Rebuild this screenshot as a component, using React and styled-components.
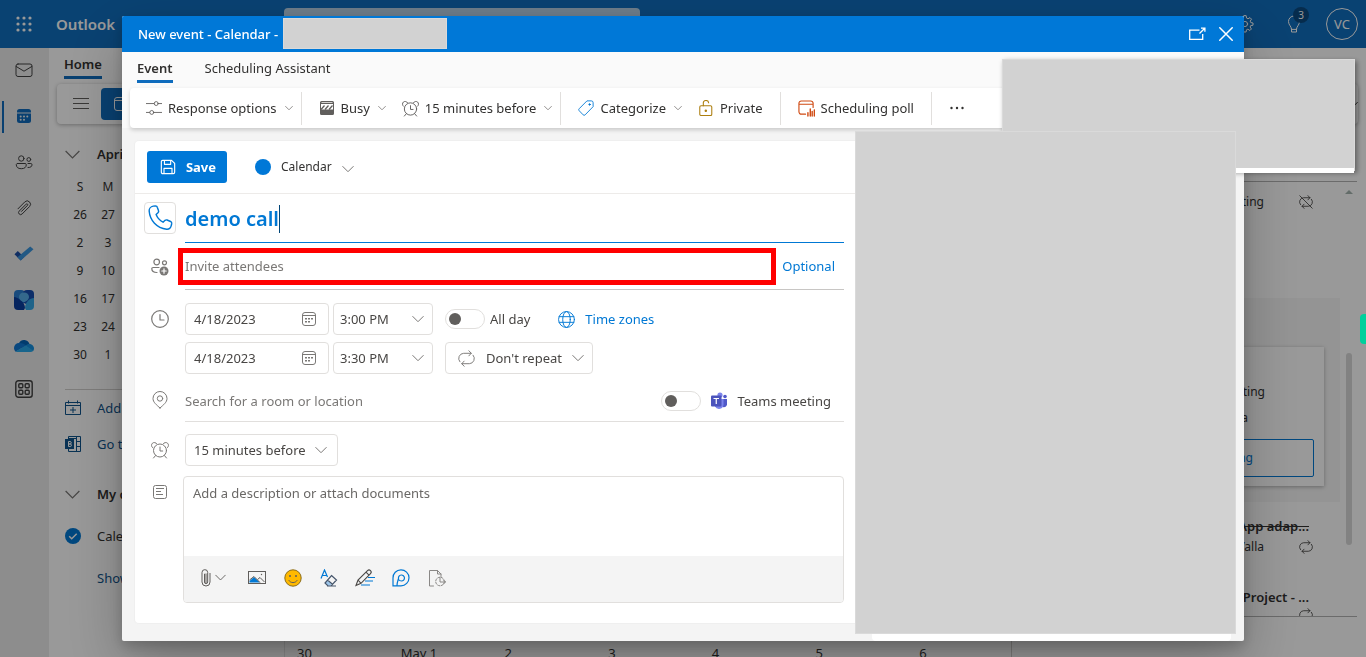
import React, { useState } from 'react';
import styled, { createGlobalStyle, css } from 'styled-components';

const GlobalStyle = createGlobalStyle`
  * {
    box-sizing: border-box;
  }

  body {
    margin: 0;
    overflow: hidden;
    color: #323130;
    font-family: 'Noto Sans', 'Open Sans', sans-serif;
    font-size: 13px;
    line-height: 20px;
  }

  button,
  input,
  select,
  textarea {
    margin: 0;
    padding: 0;
    border: 0;
    outline: 0;
    background: none;
    color: inherit;
    font: inherit;
  }

  a {
    color: inherit;
    text-decoration: none;
  }

  svg {
    display: block;
    flex: none;
  }
`;

/* ---------- icons ---------- */

const Icon = ({ size = 18, width = 1, color = 'currentColor', children }) => (
  <svg
    width={size}
    height={size}
    viewBox="0 0 18 18"
    fill="none"
    stroke={color}
    strokeWidth={width}
    strokeLinecap="round"
    strokeLinejoin="round"
    aria-hidden="true"
  >
    {children}
  </svg>
);

const ChevronIcon = ({ size = 12 }) => (
  <svg width={size} height={size} viewBox="0 0 12 12" fill="none" stroke="currentColor" strokeWidth={size < 10 ? 1.4 : 1} aria-hidden="true">
    <path d="M.5 3.200 6 8.700l5.500-5.500" />
  </svg>
);

const WaffleIcon = () => (
  <svg width="16" height="16" viewBox="0 0 16 16" fill="currentColor" aria-hidden="true">
    {[2, 8, 14].map((y) => [2, 8, 14].map((x) => <circle key={`${x}-${y}`} cx={x} cy={y} r="1.600" />))}
  </svg>
);

const MailIcon = () => (
  <Icon>
    <rect x="1" y="3" width="16" height="12.500" rx="2" />
    <path d="m1.200 5.500 7.800 4.700 7.800-4.700" />
  </Icon>
);

const CalendarFilledIcon = () => (
  <svg width="18" height="18" viewBox="0 0 18 18" aria-hidden="true">
    <path d="M4.500 2h9A2.500 2.500 0 0 1 16 4.500V5.500H2V4.500A2.500 2.500 0 0 1 4.500 2Z" fill="#0f6cbd" />
    <path d="M2 6.500h14v7a2.500 2.500 0 0 1-2.500 2.500h-9A2.500 2.500 0 0 1 2 13.500Z" fill="#0f6cbd" />
    <g fill="#f0f0f0">
      <circle cx="9" cy="9.500" r="1" />
      <circle cx="12.300" cy="9.500" r="1" />
      <circle cx="5.700" cy="9.500" r="1" />
      <circle cx="5.700" cy="12.700" r="1" />
      <circle cx="9" cy="12.700" r="1" />
    </g>
  </svg>
);

const PeopleIcon = () => (
  <Icon>
    <circle cx="6.300" cy="5.500" r="2.700" />
    <circle cx="13.800" cy="6.500" r="1.900" />
    <path d="M2.500 10.500h7.600c.8 0 1.200.5 1.200 1.200 0 2.400-1.600 4-5 4s-5-1.600-5-4c0-.7.500-1.200 1.200-1.200ZM13 10.500h2.800c.8 0 1.200.5 1.200 1.200 0 1.800-1.400 3-4 2.800" />
  </Icon>
);

const ClipIcon = () => (
  <Icon>
    <path d="m3 9.800 6.800-6.900a3.300 3.300 0 0 1 4.700 4.700l-7.400 7.400a2 2 0 0 1-2.900-2.900l7-7a.9.9 0 0 1 1.300 1.300l-6 6" />
  </Icon>
);

const ToDoIcon = () => (
  <svg width="20" height="18" viewBox="0 0 20 18" aria-hidden="true">
    <path d="m.5 9.300 3.300-3.400 6.300 6.200-3.400 3.500Z" fill="#1c4da5" />
    <path d="m6.700 15.600-3.300-3.300L16.200 1.500l3.300 2.700Z" fill="#3a94dd" />
  </svg>
);

const VivaIcon = () => (
  <svg width="20" height="20" viewBox="0 0 20 20" aria-hidden="true">
    <rect x="0" y="0" width="11" height="14" rx="4" fill="#2a7dd1" />
    <rect x="9" y="0" width="11" height="14" rx="4" fill="#164db0" />
    <path d="M0 7c4 0 11 5 11 11l-1 2H4a4 4 0 0 1-4-4Z" fill="#0b3f9e" />
    <path d="M20 8c-4 0-9 4-9 10l1 2h4a4 4 0 0 0 4-4Z" fill="#35a5e5" />
    <path d="M10 2.500c3 0 5 1.800 5 4.500 0 2.500-3 5-5 5s-5-2.500-5-5c0-2.700 2-4.500 5-4.500Z" fill="#57afe9" />
  </svg>
);

const OneDriveIcon = () => (
  <svg width="20" height="14" viewBox="0 0 20 14" aria-hidden="true">
    <path d="M5 4a5.700 5.700 0 0 1 10.500 1L8 9Z" fill="#0364b8" />
    <path d="M5.500 4A5 5 0 0 0 0 9c0 1.500.7 2.900 1.700 3.700L12 6.500A7.600 7.600 0 0 0 5.500 4Z" fill="#0f78d4" />
    <path d="M15 5c2.800 0 5 1.800 5 4.500a4 4 0 0 1-1 2.800L11.500 7c1-1.200 2-2 3.500-2Z" fill="#1490df" />
    <path d="M1.500 12.500 11.700 6.600l7.600 5.200c-.8.800-1.800 1.200-3 1.200H5c-1.400 0-2.500 0-3.500-.5Z" fill="#28a8ea" />
  </svg>
);

const AppsIcon = () => (
  <Icon width={1.4}>
    <rect x=".8" y=".8" width="16.400" height="16.400" rx="2.500" />
    <rect x="3.800" y="3.800" width="4" height="4" rx="1" />
    <rect x="10.200" y="3.800" width="4" height="4" rx="1" />
    <rect x="3.800" y="10.200" width="4" height="4" rx="1" />
    <rect x="10.200" y="10.200" width="4" height="4" rx="1" />
  </Icon>
);

const MenuIcon = () => (
  <svg width="16" height="16" viewBox="0 0 16 16" stroke="#605e5c" aria-hidden="true">
    <path d="M0 2.500h16M0 7.500h16M0 12.500h16" />
  </svg>
);

const CalendarIcon = ({ plain }) => (
  <svg width="16" height="16" viewBox="0 0 16 16" fill="none" stroke="currentColor" aria-hidden="true">
    <rect x="1.500" y="1.500" width="13" height="13" rx="2.500" />
    <path d="M1.500 4.500h13" />
    {!plain && (
      <g fill="currentColor" stroke="none">
        <rect x="7" y="7" width="2" height="1.500" />
        <rect x="10" y="7" width="2" height="1.500" />
        <rect x="4" y="7" width="2" height="1.500" />
        <rect x="4" y="10" width="2" height="1.500" />
        <rect x="7" y="10" width="2" height="1.500" />
      </g>
    )}
  </svg>
);

const CalendarAddIcon = () => (
  <svg width="16" height="16" viewBox="0 0 16 16" fill="none" stroke="currentColor" aria-hidden="true">
    <path d="M.5 2.500h15v12H.5zM.5 5.500h15M3.500.5v3M12.500.5v3M8 7v6M5 10h6" />
  </svg>
);

const BookingsIcon = () => (
  <svg width="16" height="16" viewBox="0 0 16 16" fill="none" stroke="#0f548c" aria-hidden="true">
    <path d="M3.500.5h12v15h-12zM11.500.5v15M11.500 5.500h4M11.500 10.500h4M3.500 2.500h8" />
    <rect x="0" y="3" width="9" height="10" fill="#0f548c" stroke="none" />
    <path d="M3.500 5.500v5h1.700a1.200 1.200 0 0 0 0-2.500H3.500h1.500a1.200 1.200 0 0 0 0-2.500Z" stroke="#fff" />
  </svg>
);

const CheckCircleIcon = () => (
  <svg width="16" height="16" viewBox="0 0 16 16" aria-hidden="true">
    <circle cx="8" cy="8" r="8" fill="#0078d4" />
    <path d="m4.200 8.200 2.500 2.500 5-5" fill="none" stroke="#fff" strokeWidth="1.500" />
  </svg>
);

const GearIcon = () => (
  <Icon>
    <circle cx="9" cy="9" r="2.600" />
    <path d="m7.700 1-.5 2.100-1.500.7L3.800 2.600 2.400 4.200l1.300 1.900-.6 1.500L1 8v2.200l2.200.4.6 1.400-1.300 2 1.500 1.500 2-1.300 1.400.6.4 2.200h2.300l.4-2.200 1.400-.6 2 1.300 1.500-1.500-1.300-2 .6-1.400 2.300-.4V8l-2.200-.4-.6-1.500 1.300-1.900-1.500-1.600-2 1.200-1.400-.7L10.200 1Z" />
  </Icon>
);

const BulbIcon = () => (
  <Icon>
    <path d="M6.500 14C6.500 11.500 3.500 10 3.500 6.500a5.500 5.500 0 0 1 11 0c0 3.500-3 5-3 7.500ZM6.500 14v3h5v-3" />
  </Icon>
);

const PopOutIcon = () => (
  <svg width="17" height="16" viewBox="0 0 17 16" fill="none" stroke="currentColor" strokeWidth="1.300" aria-hidden="true">
    <path d="M10.500 4.200H.7v9.100h13V8M10.500 7.500l5-5M12 2.200h3.900v3.500" />
  </svg>
);

const CloseIcon = () => (
  <Icon width={1.7} size={16}>
    <path d="m2 2 14 14M16 2 2 16" />
  </Icon>
);

const OptionsIcon = () => (
  <Icon size={16}>
    <path d="M0 4h9M14 4h4M0 14h4M9 14h9" />
    <circle cx="11.500" cy="4" r="2.200" />
    <circle cx="6.500" cy="14" r="2.200" />
  </Icon>
);

const BusyIcon = () => (
  <svg width="16" height="16" viewBox="0 0 16 16" aria-hidden="true">
    <path d="M2.500 1h11A1.500 1.500 0 0 1 15 2.500V4H1V2.500A1.500 1.500 0 0 1 2.500 1ZM1 9.500h14v4a1.500 1.500 0 0 1-1.500 1.500h-11A1.500 1.500 0 0 1 1 13.500Z" fill="#605e5c" />
    <path d="M1.500 3.500v7M14.500 3.500v7" fill="none" stroke="#605e5c" />
    <path d="M2.500 2.500h11" stroke="#d2d0ce" />
    <path d="m2 9.500 3.500-4M6 9.500l3.500-4M10 9.500l3.500-4" stroke="#605e5c" strokeWidth="1.300" />
  </svg>
);

const AlarmIcon = ({ size }) => (
  <Icon size={size}>
    <circle cx="9" cy="9.500" r="6.500" />
    <path d="M9 6v4h2.700M4.600 14.500 2.500 17M13.400 14.500l2.100 2.500M1.500 6.600A2.900 2.900 0 1 1 5.800 2.800M16.500 6.600a2.900 2.900 0 1 0-4.300-3.800" />
  </Icon>
);

const TagIcon = () => (
  <Icon size={16} color="#0078d4">
    <path d="M10.500 1H15a2 2 0 0 1 2 2v4.500L8 16.700a1.500 1.500 0 0 1-2.200 0L1.300 12a1.500 1.500 0 0 1 0-2.200Z" />
    <circle cx="13" cy="5" r=".8" fill="#0078d4" />
  </Icon>
);

const LockIcon = () => (
  <Icon size={16} width={1.2} color="#ad7f10">
    <rect x="2" y="6.500" width="13.500" height="11" rx="1.500" />
    <path d="M6 6.500V4a3 3 0 0 1 6-.8" />
    <circle cx="8.800" cy="12" r=".8" fill="#ad7f10" />
  </Icon>
);

const PollIcon = () => (
  <Icon size={17} width={1.2} color="#d04a12">
    <path d="M8 15H3.500A2.500 2.500 0 0 1 1 12.500v-9A2.500 2.500 0 0 1 3.500 1h10A2.500 2.500 0 0 1 16 3.500V8M1 4.500h15" />
    <path d="M10.500 13.500V17M13 9.500V17M15 12v5M17.300 10.500V17" strokeWidth="1.500" />
  </Icon>
);

const DotsIcon = () => (
  <svg width="16" height="16" viewBox="0 0 16 16" fill="#323130" aria-hidden="true">
    <circle cx="2.500" cy="8" r="1.200" />
    <circle cx="8" cy="8" r="1.200" />
    <circle cx="13.500" cy="8" r="1.200" />
  </svg>
);

const SaveIcon = () => (
  <Icon size={16} width={1.3}>
    <path d="M3 1.500h10L16.500 5v10a1.500 1.500 0 0 1-1.500 1.500H3A1.500 1.500 0 0 1 1.500 15V3A1.500 1.500 0 0 1 3 1.500ZM5 1.500V6h7V1.500M4.500 16.500v-6h9v6" />
  </Icon>
);

const PhoneIcon = () => (
  <Icon size={26}>
    <path d="m4.300.8 1.500-.2c.6 0 1.200.3 1.300.9l.9 2.500c.2.500 0 1-.4 1.400L6.300 6.600c.9 2.300 2.600 4.200 4.800 5.300l1.400-1.300c.4-.3.900-.4 1.400-.2l2.400 1c.6.300.9.900.8 1.500l-.3 1.300c-.2 1.600-1.600 2.800-3.200 2.600C6.700 15.900 2 10.800 1.500 4.200 1.400 2.600 2.600 1.100 4.300.8Z" />
  </Icon>
);

const InviteIcon = () => (
  <Icon width={1.2}>
    <circle cx="5.700" cy="4" r="2.800" />
    <circle cx="13.500" cy="4.800" r="2" />
    <path d="M8 9.500H2.200c-.8 0-1.400.6-1.400 1.300 0 2.200 1.600 3.700 5.200 3.700" />
    <circle cx="13" cy="13" r="4.500" fill="currentColor" stroke="none" />
    <path d="M13 10.800v4.400M10.800 13h4.400" stroke="#fff" />
  </Icon>
);

const ClockIcon = () => (
  <Icon width={1.2}>
    <circle cx="9" cy="9" r="8.300" />
    <path d="M9 4.500V10h4" />
  </Icon>
);

const GlobeIcon = () => (
  <Icon size={17} color="#0078d4">
    <circle cx="9" cy="9" r="8.400" />
    <ellipse cx="9" cy="9" rx="4" ry="8.400" />
    <path d="M1.300 6h15.400M1.300 12h15.400" />
  </Icon>
);

const repeatPath = 'M11.500.8 14 3.500l-2.500 2.700M14 3.500H6a5.500 5.500 0 0 0-4 9M6.500 17.200 4 14.500l2.500-2.700M4 14.500h8a5.500 5.500 0 0 0 4-9';

const RepeatIcon = ({ size = 16 }) => (
  <Icon size={size}>
    <path d={repeatPath} />
  </Icon>
);

const RepeatOffIcon = () => (
  <Icon size={14}>
    <path d={`${repeatPath}M1 1l16 16`} />
  </Icon>
);

const PinIcon = () => (
  <Icon>
    <path d="M9 17C5.500 13.800 2 11.300 2 7.500a7 7 0 0 1 14 0c0 3.800-3.500 6.300-7 9.500Z" />
    <circle cx="9" cy="7.500" r="2.700" />
  </Icon>
);

const NoteIcon = () => (
  <svg width="16" height="16" viewBox="0 0 16 16" fill="none" stroke="currentColor" aria-hidden="true">
    <rect x="1.500" y="1.500" width="13" height="13" rx="2" />
    <path d="M4 4.500h8M4 7.500h5M4 10.500h7" />
  </svg>
);

const TeamsIcon = () => (
  <svg width="18" height="18" viewBox="0 0 18 18" aria-hidden="true">
    <circle cx="15" cy="4.500" r="1.800" fill="#5059c9" />
    <circle cx="10" cy="3" r="2.600" fill="#7b83eb" />
    <path d="M13 7h4v5.500a3 3 0 0 1-4 2.500Z" fill="#5059c9" />
    <path d="M5 7h8.500v5.500a4.500 4.500 0 0 1-8.500 2Z" fill="#7b83eb" />
    <rect x="1" y="3.500" width="10.500" height="11" rx="1" fill="#4b53bc" />
    <path d="M3.500 6.500h5.500M6.250 6.500v5.500" stroke="#fff" strokeWidth="1.200" />
  </svg>
);

const AttachIcon = () => (
  <svg width="10" height="18" viewBox="0 0 10 18" fill="none" stroke="#605e5c" aria-hidden="true">
    <path d="M3 4.500h3.500v8.500a1.700 1.700 0 0 1-3.400 0Z" fill="#a8a6a4" stroke="none" />
    <path d="M9 4v9a4 4 0 0 1-8 0V3.500a2.800 2.800 0 0 1 5.700 0V13a1.600 1.600 0 0 1-3.200 0V5" />
  </svg>
);

const ImageIcon = () => (
  <svg width="18" height="18" viewBox="0 0 18 18" aria-hidden="true">
    <path d="M1.500 13.500V12L6 8l6 5.500Z" fill="#0078d4" />
    <path d="m1.500 11 4.500-3.500 6 6M9.500 10.500l2.500-2 4.500 4.500" fill="none" stroke="#605e5c" />
    <rect x=".5" y="2.500" width="17" height="12" fill="none" stroke="#605e5c" />
    <circle cx="13.500" cy="5.500" r=".7" fill="#605e5c" />
  </svg>
);

const SmileIcon = () => (
  <svg width="18" height="18" viewBox="0 0 18 18" fill="none" aria-hidden="true">
    <circle cx="9" cy="9" r="8.200" fill="#ffb900" stroke="#8a6d1c" />
    <circle cx="6" cy="7" r="1" fill="#605e5c" />
    <circle cx="12" cy="7" r="1" fill="#605e5c" />
    <path d="M4.800 11.200c1.800 3.200 6.600 3.200 8.400 0" stroke="#605e5c" />
  </svg>
);

const ClearFormatIcon = () => (
  <svg width="18" height="18" viewBox="0 0 18 18" fill="none" aria-hidden="true">
    <path d="M1 9.500 4.500 1 7.500 8M2.200 6.500h4.600" stroke="#0078d4" strokeWidth="1.200" />
    <path d="m5.500 13.800 2-2.300 4 3.700-1.200 1.500H8Z" fill="#9cc5ea" />
    <path d="m11.500 6.500 5 4.500-5.500 6H8l-3-3ZM7.500 11l5 4.200M7 17h9" stroke="#44546a" strokeWidth="1.200" />
  </svg>
);

const PenIcon = () => (
  <svg width="18" height="18" viewBox="1 0 18 18" fill="none" overflow="visible" aria-hidden="true">
    <path d="M13 8.500h7M10 12h8M6 16h9" stroke="#0078d4" strokeWidth="1.200" />
    <path d="M1 16.500 3 11 12.500 1.700a2 2 0 0 1 3 3L6 14.300ZM3 11l3 3.300M11 3.200l3 3" fill="#f4f4f4" stroke="#484644" strokeWidth="1.100" />
  </svg>
);

const LoopIcon = () => (
  <Icon color="#0078d4" width={1.2}>
    <path d="M1 16.800V9a8 8 0 1 1 8 7.800Z" strokeLinejoin="miter" />
    <path d="M5 16.500c0-3 .8-4.500 1.500-7A3 3 0 1 1 9.500 12C8.300 12 7.200 11.500 6.500 10.500" />
  </Icon>
);

const TemplateIcon = () => (
  <Icon color="#8a8886">
    <path d="M5.500 17h-4V1.500h8L13 5v2.500M9.500 1.500V5H13" strokeLinejoin="miter" />
    <circle cx="12" cy="12.500" r="4.300" strokeDasharray="2 1.500" />
    <path d="M12 8.500v4.500h5.500M15.500 11l2 2-2 2" />
  </Icon>
);

/* ---------- page behind the dialog ---------- */

const Page = styled.div`
  display: flex;
  flex-direction: column;
  height: 100vh;
  overflow: hidden;
  background: #fff;
`;

const TopBar = styled.header`
  display: grid;
  grid-template-columns: 16px 204px minmax(0, 356px) 1fr;
  align-items: center;
  column-gap: 24px;
  height: 48px;
  padding: 0 8px 0 16px;
  flex: none;
  background: #106ebe;
  color: #fff;
`;

const Brand = styled.a`
  font-size: 15px;
  font-weight: 600;
`;

const SearchBox = styled.input`
  width: 100%;
  height: 32px;
  border-radius: 4px;
  background: #b7d0e6;
`;

const TopActions = styled.div`
  display: flex;
  justify-content: flex-end;
  align-items: center;
  gap: 31px;
`;

const IconButton = styled.button`
  position: relative;
  display: flex;
  align-items: center;
  justify-content: center;
  gap: 4px;
  margin-right: ${(props) => (props.$menu ? 4 : 0)}px;
  color: inherit;
  cursor: pointer;
`;

const Badge = styled.span`
  position: absolute;
  top: -8px;
  left: 8px;
  width: 16px;
  height: 16px;
  border-radius: 8px;
  background: #0b4a80;
  font-size: 10px;
  line-height: 16px;
`;

const Avatar = styled.button`
  width: 32px;
  height: 32px;
  margin-left: -8px;
  border: 1px solid #fff;
  border-radius: 50%;
`;

const Shell = styled.div`
  display: flex;
  flex: 1;
  min-height: 0;
`;

const Rail = styled.nav`
  width: 48px;
  flex: none;
  background: #ebebeb;
  box-shadow: 1px 0 0 #ebebeb;
  color: #424242;
`;

const RailItem = styled.a`
  display: flex;
  align-items: center;
  justify-content: center;
  height: ${(props) => (props.$short ? '40px' : '46px')};
  padding-bottom: 2px;

  ${(props) =>
    props.$active &&
    css`
      background: linear-gradient(#0f6cbd, #0f6cbd) 2px center / 2px 32px no-repeat;
    `}
`;

const Workspace = styled.div`
  display: flex;
  flex-direction: column;
  flex: 1;
  min-width: 0;
  padding-left: 1px;
`;

const HomeTab = styled.div`
  padding: 6px 15px 0;
  height: 36px;

  a {
    display: inline-block;
    height: 25px;
    border-bottom: 3px solid #0f6cbd;
    font-weight: 600;
  }
`;

const Ribbon = styled.div`
  display: flex;
  align-items: center;
  gap: 12px;
  height: 40px;
  margin: 0 8px;
  padding-left: 16px;
  flex: none;
  border-radius: 4px;
  background: #fff;
  box-shadow: 0 1px 4px rgba(0, 0, 0, 0.3);

  > svg:last-child {
    margin-left: auto;
  }
`;

const NewEventButton = styled.button`
  display: flex;
  align-items: center;
  width: 120px;
  height: 32px;
  padding: 0 12px;
  border-radius: 4px;
  background: #0f6cbd;
  color: #fff;
`;

const Columns = styled.div`
  display: flex;
  flex: 1;
  min-height: 0;
`;

const Sidebar = styled.aside`
  width: 236px;
  padding: 12px 16px;
  flex: none;
  border-right: 1px solid #e6e6e6;
`;

const SideRow = styled.a`
  display: grid;
  grid-template-columns: 16px 1fr;
  column-gap: 16px;
  align-items: center;
  height: ${(props) => props.$height || 36}px;
  color: ${(props) => (props.$link ? '#0f548c' : '#323130')};
  font-weight: ${(props) => (props.$strong ? 600 : 400)};
  white-space: nowrap;

  span {
    grid-column: 2;
  }

  svg {
    color: ${(props) => (props.$link ? '#0f548c' : '#797775')};
  }
`;

const MonthGrid = styled.table`
  border-collapse: collapse;
  border-spacing: 0;
  margin: 1px 0 0 1px;
  font-size: 12px;
  text-align: center;

  th,
  td {
    width: 28px;
    height: 28px;
    padding: 0;
    font-weight: 400;
  }
`;

const Divider = styled.hr`
  height: 1px;
  margin: 20px 0 0;
  border: 0;
  background: #d2d0ce;
`;

const Month = styled.section`
  display: flex;
  flex-direction: column;
  justify-content: flex-end;
  flex: 1;
  border-right: 1px solid #d2d0ce;
`;

const Week = styled.div`
  display: grid;
  grid-template-columns: repeat(7, 1fr);
  height: 14px;

  span {
    padding-left: 12px;
  }
`;

const Agenda = styled.aside`
  display: flex;
  flex-direction: column;
  width: 354px;
  margin-bottom: 40px;
  padding-top: 57px;
  flex: none;
`;

const AgendaList = styled.div`
  display: grid;
  grid-template-columns: 1fr 17px;
  flex: 1;
  min-height: 0;
  margin-right: 9px;
  overflow: hidden;
  border: solid #b3b3b3;
  border-width: 1px 0;
`;

const AgendaItems = styled.div`
  display: flex;
  flex-direction: column;
  padding-left: 16px;
`;

const AgendaEvent = styled.div`
  display: flex;
  flex-direction: column;
  gap: 1px;
  height: ${(props) => props.$height}px;
  padding: ${(props) => (props.$first ? 10 : 14)}px 31px 0 0;
  flex: none;
  text-align: right;
  font-size: 12px;
`;

const EventName = styled.strong`
  font-size: 13px;
  font-weight: 600;
  text-decoration: ${(props) => (props.$past ? 'line-through' : 'none')};
`;

const EventMeta = styled.div`
  display: flex;
  justify-content: flex-end;
  align-items: center;
  gap: 35px;
  margin-right: -4px;
`;

const ActiveEvent = styled.div`
  height: 204px;
  padding: 49px 16px 0 0;
  flex: none;
  background: #f7f7f7;
`;

const EventCard = styled.div`
  display: flex;
  flex-direction: column;
  height: 139px;
  padding: 35px 10px 8px;
  background: #fff;
  box-shadow: 0 1px 4px rgba(0, 0, 0, 0.3);
  text-align: right;
  font-size: 12px;

  p {
    margin: 0 49px 6px 0;
  }

  p + p {
    margin-right: 66px;
  }

  button {
    height: 38px;
    margin-top: 5px;
    padding-right: 60px;
    flex: none;
    border: 1px solid #0078d4;
    border-radius: 2px;
    color: #0078d4;
    text-align: right;
  }
`;

const ScrollBar = styled.div`
  display: grid;
  grid-template-rows: 163px 192px 1fr;
  justify-items: center;
  padding: 8px 0 6px;

  &::before,
  &::after {
    content: '';
    height: 0;
    border: solid transparent;
    border-width: 0 4px;
  }

  &::before {
    border-bottom: 4px solid #a5b5b0;
  }

  &::after {
    align-self: end;
    border-top: 4px solid #a5b5b0;
  }

  i {
    width: 6px;
    border-radius: 3px;
    background: #d9d9d9;
  }
`;

const EdgeTab = styled.div`
  position: fixed;
  z-index: 3;
  top: 314px;
  right: 0;
  width: 6px;
  height: 30px;
  border-radius: 4px 0 0 4px;
  background: #00d09c;
`;

/* ---------- dialog ---------- */

const Overlay = styled.div`
  position: fixed;
  z-index: 2;
  inset: 0;
  display: flex;
  padding: 16px 122px;
  background: rgba(0, 0, 0, 0.4);
`;

const Dialog = styled.section`
  position: relative;
  display: flex;
  flex-direction: column;
  flex: 1;
  border-radius: 2px;
  background: linear-gradient(#fafafa 112px, #f4f4f4 112px);
  box-shadow: 0 25px 58px rgba(0, 0, 0, 0.25), 0 5px 14px rgba(0, 0, 0, 0.2);
`;

const DialogHeader = styled.header`
  display: flex;
  align-items: center;
  height: 36px;
  padding: 0 10px 0 16px;
  flex: none;
  gap: 12px;
  border-radius: 2px 2px 0 0;
  background: #0078d7;
  color: #fff;

  h1 {
    margin: 0 auto 0 0;
    font-size: 13px;
    font-weight: 500;
  }
`;

const Tabs = styled.nav`
  display: flex;
  gap: 32px;
  height: 36px;
  padding: 6px 15px 0;
  flex: none;
`;

const Tab = styled.button`
  height: 25px;
  padding-bottom: 2px;
  border-bottom: 3px solid ${(props) => (props.$active ? '#0f6cbd' : 'transparent')};
  font-weight: ${(props) => (props.$active ? 600 : 400)};
`;

const Toolbar = styled.div`
  display: flex;
  align-items: center;
  height: 40px;
  margin: 0 8px 13px;
  padding-left: 8px;
  flex: none;
  border-radius: 4px;
  background: #fff;
  box-shadow: 0 2px 4px rgba(0, 0, 0, 0.18);
`;

const ToolButton = styled.button`
  display: flex;
  align-items: center;
  gap: 6px;
  height: 32px;
  padding: 0 ${(props) => (props.$wide ? 17 : 8)}px 0 8px;
  color: #323130;

  svg:first-child {
    color: #605e5c;
  }

  span + svg {
    margin-left: 2px;
    color: #8a8886;
  }
`;

const ToolDivider = styled.span`
  width: 1px;
  height: 33px;
  margin-right: 9px;
  background: #e1dfdd;
`;

const DialogBody = styled.div`
  display: grid;
  grid-template-columns: minmax(0, 1fr) 359px;
  column-gap: 8px;
  flex: 1;
  min-height: 0;
  padding: 0 13px;
`;

const Form = styled.form`
  display: flex;
  flex-direction: column;
  margin-bottom: 18px;
  border-radius: 4px;
  background: #fff;
  box-shadow: 0 0 1px 1px #efefef;
`;

const SidePane = styled.div`
  border-radius: 4px;
  background: #fff;
`;

const FormActions = styled.div`
  display: flex;
  align-items: center;
  gap: 28px;
  height: 53px;
  padding-left: 12px;
  flex: none;
  border-bottom: 1px solid #edebe9;
`;

const SaveButton = styled.button`
  display: flex;
  align-items: center;
  justify-content: center;
  gap: 10px;
  width: 80px;
  height: 32px;
  padding-left: 2px;
  border-radius: 3px;
  background: #0078d7;
  color: #fff;
  font-weight: 700;
`;

const CalendarPicker = styled.button`
  display: flex;
  align-items: center;
  gap: 10px;
  font-size: 12px;

  i {
    width: 16px;
    height: 16px;
    border-radius: 50%;
    background: #0078d7;
  }

  svg {
    margin-top: 4px;
    color: #797775;
  }
`;

const Fields = styled.div`
  display: flex;
  flex-direction: column;
  padding: 0 20px 0 9px;
`;

const Field = styled.div`
  display: grid;
  grid-template-columns: 32px 1fr;
  column-gap: 9px;
  margin-top: ${(props) => props.$top || 0}px;
  color: #484644;
`;

const FieldIcon = styled.span`
  display: flex;
  align-items: center;
  justify-content: center;
  height: ${(props) => props.$height || 32}px;
  color: #7a7876;
`;

const CharmButton = styled.button`
  display: flex;
  align-items: center;
  justify-content: center;
  height: 32px;
  border: 1px solid #e1dfdd;
  border-radius: 4px;
  color: #0078d4;
`;

const Line = styled.div`
  position: relative;
  display: flex;
  align-items: center;
  min-width: 0;
  height: ${(props) => props.$height}px;
  padding: 0 ${(props) => props.$right || 0}px ${(props) => props.$bottom || 0}px 0;
  border-bottom: 1px solid ${(props) => props.$color || '#e1dfdd'};
`;

const TitleInput = styled.input`
  field-sizing: content;
  height: 28px;
  border-right: 1px solid #004578;
  color: #0078d4;
  font-size: 20px;
  font-weight: 600;
  line-height: 28px;
`;

const TextInput = styled.input`
  flex: 1;
  min-width: 0;
  height: 32px;

  &::placeholder {
    color: #7a7876;
    opacity: 1;
  }
`;

const Highlight = styled.div`
  position: absolute;
  top: 5px;
  right: 68px;
  bottom: 4px;
  left: -7px;
  border: 5px solid #f00;
  pointer-events: none;
`;

const TextLink = styled.a`
  display: flex;
  align-items: center;
  gap: 10px;
  color: #0078d4;
`;

const DateRows = styled.div`
  display: grid;
  grid-template-columns: 144px 100px auto;
  justify-content: start;
  gap: 7px 4px;
`;

const Box = styled.div`
  display: flex;
  align-items: center;
  justify-content: space-between;
  gap: 10px;
  height: 32px;
  padding: 0 11px 0 8px;
  border: 1px solid #e1dfdd;
  border-radius: 4px;

  input {
    flex: 1;
    min-width: 0;
  }

  svg {
    color: #7a7876;
  }
`;

const SelectBox = styled(Box)`
  display: inline-grid;
  grid-template-columns: ${(props) => (props.$icon ? '18px ' : '')}1fr 12px;
  column-gap: ${(props) => (props.$icon ? 10 : 8)}px;
  width: ${(props) => props.$width}px;
  padding: 0 ${(props) => props.$right || 8}px 0 ${(props) => props.$left || 6}px;

  select {
    grid-row: 1;
    grid-column: ${(props) => (props.$icon ? '2 / 4' : '1 / 3')};
    appearance: none;
  }

  svg {
    grid-row: 1;
    pointer-events: none;
  }

  svg:last-child {
    grid-column: ${(props) => (props.$icon ? 3 : 2)};
  }
`;

const RowOptions = styled.div`
  display: flex;
  align-items: center;
  gap: 28px;
  padding-left: 8px;
`;

const Switch = styled.label`
  display: flex;
  align-items: center;
  gap: ${(props) => props.$gap || 5}px;
  white-space: nowrap;

  input {
    display: flex;
    align-items: center;
    width: 40px;
    height: 20px;
    padding: 0 3px;
    appearance: none;
    border: 1px solid #e1dfdd;
    border-radius: 10px;
  }

  input::before {
    content: '';
    width: 12px;
    height: 12px;
    border-radius: 50%;
    background: #605e5c;
  }

  input:checked {
    justify-content: flex-end;
    background: #c7e0f4;
  }
`;

const Editor = styled.div`
  display: flex;
  flex-direction: column;
  height: 127px;
  margin-left: -2px;
  overflow: hidden;
  border: 1px solid #e1dfdd;
  border-radius: 4px;

  textarea {
    flex: 1;
    padding: 6px 9px;
    resize: none;
  }

  textarea::placeholder {
    color: #6a6866;
    opacity: 1;
  }
`;

const EditorTools = styled.div`
  display: flex;
  align-items: center;
  gap: 18px;
  height: 46px;
  padding: 0 17px 3px;
  background: #f4f4f4;
  color: #605e5c;
`;

/* redaction blocks lying over the window */
const Mask = styled.div`
  position: absolute;
  background: #d2d2d2;
  border: 1px solid #dadada;
`;

const TitleMask = styled(Mask)`
  top: 2px;
  left: 161px;
  width: 164px;
  height: 31px;
`;

const PaneMask = styled(Mask)`
  top: 115px;
  right: 8px;
  bottom: 7px;
  left: 733px;
`;

const CornerMask = styled(Mask)`
  top: 43px;
  right: -111px;
  left: 880px;
  height: 112px;
  box-shadow: 2px 2px 5px rgba(0, 0, 0, 0.4);
`;

const CornerStrip = styled.div`
  position: absolute;
  top: 152px;
  right: -110px;
  width: 119px;
  height: 5px;
  background: #fff;
`;

const weeks = [
  [26, 27, 28, 29, 30, 31, 1],
  [2, 3, 4, 5, 6, 7, 8],
  [9, 10, 11, 12, 13, 14, 15],
  [16, 17, 18, 19, 20, 21, 22],
  [23, 24, 25, 26, 27, 28, 29],
  [30, 1, 2, 3, 4, 5, 6],
];

const railItems = [
  { name: 'Mail', icon: <MailIcon /> },
  { name: 'Calendar', icon: <CalendarFilledIcon />, active: true },
  { name: 'People', icon: <PeopleIcon /> },
  { name: 'Files', icon: <ClipIcon /> },
  { name: 'To Do', icon: <ToDoIcon /> },
  { name: 'Viva', icon: <VivaIcon /> },
  { name: 'OneDrive', icon: <OneDriveIcon /> },
  { name: 'More apps', icon: <AppsIcon />, short: true },
];

const Background = () => (
  <Page>
    <TopBar>
      <WaffleIcon />
      <Brand href="#">Outlook</Brand>
      <SearchBox aria-label="Search" />
      <TopActions>
        <IconButton aria-label="Settings">
          <GearIcon />
        </IconButton>
        <IconButton aria-label="Tips">
          <BulbIcon />
          <Badge>3</Badge>
        </IconButton>
        <Avatar>VC</Avatar>
      </TopActions>
    </TopBar>
    <Shell>
      <Rail>
        {railItems.map((item) => (
          <RailItem key={item.name} href="#" aria-label={item.name} $active={item.active} $short={item.short}>
            {item.icon}
          </RailItem>
        ))}
      </Rail>
      <Workspace>
        <HomeTab>
          <a href="#">Home</a>
        </HomeTab>
        <Ribbon>
          <MenuIcon />
          <NewEventButton aria-label="New event">
            <CalendarIcon plain />
          </NewEventButton>
          <ChevronIcon size={8} />
        </Ribbon>
        <Columns>
          <Sidebar>
            <SideRow href="#" $strong>
              <ChevronIcon size={15} />
              <span>April 2023</span>
            </SideRow>
            <MonthGrid>
              <thead>
                <tr>
                  {['S', 'M', 'T', 'W', 'T', 'F', 'S'].map((day, i) => (
                    <th key={i}>{day}</th>
                  ))}
                </tr>
              </thead>
              <tbody>
                {weeks.map((week, i) => (
                  <tr key={i}>
                    {week.map((day) => (
                      <td key={day}>{day}</td>
                    ))}
                  </tr>
                ))}
              </tbody>
            </MonthGrid>
            <Divider />
            <SideRow href="#" $link>
              <CalendarAddIcon />
              <span>Add calendar</span>
            </SideRow>
            <SideRow href="#" $link>
              <BookingsIcon />
              <span>Go to Booking</span>
            </SideRow>
            <SideRow href="#" $strong $height={64}>
              <ChevronIcon size={15} />
              <span>My calendars</span>
            </SideRow>
            <SideRow href="#" $height={10}>
              <CheckCircleIcon />
              <span>Calendar</span>
            </SideRow>
            <SideRow href="#" $link $height={84}>
              <span>Show all</span>
            </SideRow>
          </Sidebar>
          <Month>
            <Week>
              {['30', 'May 1', '2', '3', '4', '5', '6'].map((day) => (
                <span key={day}>{day}</span>
              ))}
            </Week>
          </Month>
          <Agenda>
            <AgendaList>
              <AgendaItems>
                <AgendaEvent $height={116} $first>
                  <EventMeta>
                    Microsoft Teams Meeting <RepeatOffIcon />
                  </EventMeta>
                </AgendaEvent>
                <ActiveEvent>
                  <EventCard>
                    <p>Microsoft Teams Meeting</p>
                    <p>Valla</p>
                    <button>Join meeting</button>
                  </EventCard>
                </ActiveEvent>
                <AgendaEvent $height={71}>
                  <EventName $past>App adap...</EventName>
                  <EventMeta>
                    Valla <RepeatIcon size={14} />
                  </EventMeta>
                </AgendaEvent>
                <AgendaEvent $height={71}>
                  <EventName>Project - ...</EventName>
                  <EventMeta>
                    <RepeatIcon size={14} />
                  </EventMeta>
                </AgendaEvent>
              </AgendaItems>
              <ScrollBar>
                <i />
              </ScrollBar>
            </AgendaList>
          </Agenda>
        </Columns>
      </Workspace>
    </Shell>
  </Page>
);

const App = () => {
  const [title, setTitle] = useState('demo call');
  const [allDay, setAllDay] = useState(false);
  const [teams, setTeams] = useState(false);

  return (
    <>
      <GlobalStyle />
      <Background />
      <Overlay>
        <Dialog role="dialog" aria-label="New event">
          <DialogHeader>
            <h1>New event - Calendar -</h1>
            <IconButton aria-label="Open in new window">
              <PopOutIcon />
            </IconButton>
            <IconButton aria-label="Close">
              <CloseIcon />
            </IconButton>
          </DialogHeader>
          <Tabs>
            <Tab $active>Event</Tab>
            <Tab>Scheduling Assistant</Tab>
          </Tabs>
          <Toolbar>
            <ToolButton>
              <OptionsIcon />
              <span>Response options</span>
              <ChevronIcon size={8} />
            </ToolButton>
            <ToolDivider />
            <ToolButton>
              <BusyIcon />
              <span>Busy</span>
              <ChevronIcon size={8} />
            </ToolButton>
            <ToolButton>
              <AlarmIcon size={17} />
              <span>15 minutes before</span>
              <ChevronIcon size={8} />
            </ToolButton>
            <ToolDivider />
            <ToolButton>
              <TagIcon />
              <span>Categorize</span>
              <ChevronIcon size={8} />
            </ToolButton>
            <ToolButton $wide>
              <LockIcon />
              <span>Private</span>
            </ToolButton>
            <ToolDivider />
            <ToolButton $wide>
              <PollIcon />
              <span>Scheduling poll</span>
            </ToolButton>
            <ToolDivider />
            <ToolButton aria-label="More options">
              <DotsIcon />
            </ToolButton>
          </Toolbar>
          <DialogBody>
            <Form onSubmit={(e) => e.preventDefault()}>
              <FormActions>
                <SaveButton type="submit">
                  <SaveIcon />
                  Save
                </SaveButton>
                <CalendarPicker type="button">
                  <i />
                  Calendar
                  <ChevronIcon />
                </CalendarPicker>
              </FormActions>
              <Fields>
                <Field $top={8}>
                  <CharmButton type="button" aria-label="Charm">
                    <PhoneIcon />
                  </CharmButton>
                  <Line $height={41} $bottom={6} $color="#0078d4">
                    <TitleInput aria-label="Title" value={title} onChange={(e) => setTitle(e.target.value)} />
                  </Line>
                </Field>
                <Field>
                  <FieldIcon as="label" htmlFor="attendees" $height={48}>
                    <InviteIcon />
                  </FieldIcon>
                  <Line $height={47} $right={9} $color="#c8c6c4">
                    <TextInput id="attendees" placeholder="Invite attendees" />
                    <TextLink href="#">Optional</TextLink>
                    <Highlight />
                  </Line>
                </Field>
                <Field $top={12}>
                  <FieldIcon>
                    <ClockIcon />
                  </FieldIcon>
                  <DateRows>
                    <Box>
                      <input aria-label="Start date" defaultValue="4/18/2023" />
                      <CalendarIcon />
                    </Box>
                    <SelectBox $width={100}>
                      <select aria-label="Start time">
                        <option>3:00 PM</option>
                      </select>
                      <ChevronIcon />
                    </SelectBox>
                    <RowOptions>
                      <Switch>
                        <input type="checkbox" checked={allDay} onChange={() => setAllDay(!allDay)} />
                        All day
                      </Switch>
                      <TextLink href="#">
                        <GlobeIcon />
                        Time zones
                      </TextLink>
                    </RowOptions>
                    <Box>
                      <input aria-label="End date" defaultValue="4/18/2023" />
                      <CalendarIcon />
                    </Box>
                    <SelectBox $width={100}>
                      <select aria-label="End time">
                        <option>3:30 PM</option>
                      </select>
                      <ChevronIcon />
                    </SelectBox>
                    <RowOptions>
                      <SelectBox $width={148} $left={12} $icon>
                        <RepeatIcon size={17} />
                        <select aria-label="Repeat">
                          <option>Don't repeat</option>
                        </select>
                        <ChevronIcon />
                      </SelectBox>
                    </RowOptions>
                  </DateRows>
                </Field>
                <Field $top={6}>
                  <FieldIcon as="label" htmlFor="location" $height={40}>
                    <PinIcon />
                  </FieldIcon>
                  <Line $height={42} $right={13}>
                    <TextInput id="location" placeholder="Search for a room or location" />
                    <Switch $gap={9}>
                      <input type="checkbox" checked={teams} onChange={() => setTeams(!teams)} />
                      <TeamsIcon />
                      Teams meeting
                    </Switch>
                  </Line>
                </Field>
                <Field $top={12}>
                  <FieldIcon>
                    <AlarmIcon />
                  </FieldIcon>
                  <SelectBox $width={153} $right={10} $left={8}>
                    <select aria-label="Reminder">
                      <option>15 minutes before</option>
                    </select>
                    <ChevronIcon />
                  </SelectBox>
                </Field>
                <Field $top={10}>
                  <FieldIcon as="label" htmlFor="description">
                    <NoteIcon />
                  </FieldIcon>
                  <Editor>
                    <textarea id="description" placeholder="Add a description or attach documents" />
                    <EditorTools>
                      <IconButton type="button" aria-label="Attach file" $menu>
                        <AttachIcon />
                        <ChevronIcon size={11} />
                      </IconButton>
                      <IconButton type="button" aria-label="Insert picture">
                        <ImageIcon />
                      </IconButton>
                      <IconButton type="button" aria-label="Insert emoji">
                        <SmileIcon />
                      </IconButton>
                      <IconButton type="button" aria-label="Formatting">
                        <ClearFormatIcon />
                      </IconButton>
                      <IconButton type="button" aria-label="Draw">
                        <PenIcon />
                      </IconButton>
                      <IconButton type="button" aria-label="Loop component">
                        <LoopIcon />
                      </IconButton>
                      <IconButton type="button" aria-label="Templates">
                        <TemplateIcon />
                      </IconButton>
                    </EditorTools>
                  </Editor>
                </Field>
              </Fields>
            </Form>
            <SidePane />
          </DialogBody>
          <TitleMask />
          <CornerMask />
          <CornerStrip />
          <PaneMask />
        </Dialog>
      </Overlay>
      <EdgeTab />
    </>
  );
};

export default App;
